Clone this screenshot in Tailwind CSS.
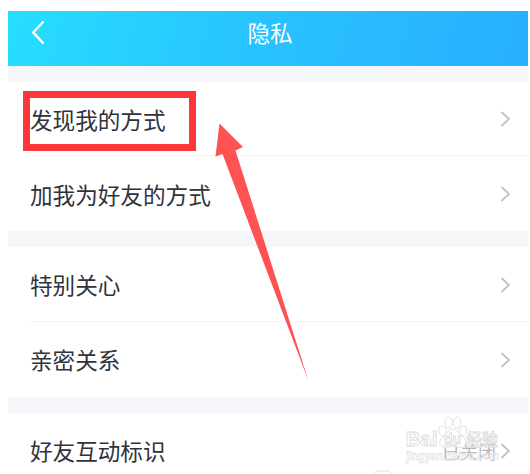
<!DOCTYPE html>
<html lang="zh-CN">
<head>
  <meta charset="UTF-8">
  <meta name="viewport" content="width=device-width, initial-scale=1.0">
  <title>隐私</title>
  <script src="https://cdn.jsdelivr.net/npm/@tailwindcss/browser@4"></script>
</head>
<body class="bg-white h-[474px] overflow-hidden font-['Noto_Sans_CJK_SC',sans-serif] text-[22.6px] leading-none text-[#30323c]">
  <div class="relative h-[474px] pt-[11px] pl-2 pr-0.5 overflow-hidden">

    <!-- Header -->
    <header class="relative h-[55px] flex items-center justify-center bg-linear-[105deg] from-[#27ddff] via-[#28c2ff] to-[#28afff] text-white">
      <svg class="absolute left-[22px] top-[9px] w-4 h-[25px]" viewBox="0 0 16 25" fill="none" stroke="currentColor" stroke-width="2.3">
        <path d="M13.6 1.5L3.2 12.4L13.6 23.6"/>
      </svg>
      <h1 class="pb-[11px] pl-1">隐私</h1>
    </header>

    <!-- Settings -->
    <main>
      <section class="border-t-[16px] border-[#f5f7fa]">
        <div class="h-[73px] pl-[22px] pr-[17px] flex items-center justify-between">
          <span class="pt-[3px]">发现我的方式</span>
          <svg class="w-[11px] h-4" viewBox="0 0 11 16" fill="none" stroke="#c2c2c2" stroke-width="1.8"><path d="M1.5 1L9 8L1.5 15"/></svg>
        </div>
        <div class="h-[76px] ml-[22px] pr-[17px] flex items-center justify-between border-t border-[#f3f4f5]">
          <span class="pt-[3px]">加我为好友的方式</span>
          <svg class="w-[11px] h-4" viewBox="0 0 11 16" fill="none" stroke="#c2c2c2" stroke-width="1.8"><path d="M1.5 1L9 8L1.5 15"/></svg>
        </div>
      </section>
      <section class="border-t-[16px] border-[#f5f7fa]">
        <div class="h-[74px] pl-[22px] pr-[17px] pt-px flex items-center justify-between">
          <span class="pt-[2px]">特别关心</span>
          <svg class="w-[11px] h-4" viewBox="0 0 11 16" fill="none" stroke="#c2c2c2" stroke-width="1.8"><path d="M1.5 1L9 8L1.5 15"/></svg>
        </div>
        <div class="h-[76px] ml-[22px] pr-[17px] flex items-center justify-between border-t border-[#f3f4f5]">
          <span class="pt-[2px]">亲密关系</span>
          <svg class="w-[11px] h-4" viewBox="0 0 11 16" fill="none" stroke="#c2c2c2" stroke-width="1.8"><path d="M1.5 1L9 8L1.5 15"/></svg>
        </div>
      </section>
      <section class="border-t-[16px] border-[#f5f7fa]">
        <div class="h-[75px] pl-[22px] pr-[17px] flex items-center">
          <span class="pt-[2px]">好友互动标识</span>
          <span class="ml-auto mr-1 text-[18px] text-[#b4b5bc]">已关闭</span>
          <svg class="w-[11px] h-4" viewBox="0 0 11 16" fill="none" stroke="#c2c2c2" stroke-width="1.8"><path d="M1.5 1L9 8L1.5 15"/></svg>
        </div>
      </section>
    </main>

    <!-- Highlight box and arrow -->
    <div class="absolute left-[23px] top-[91px] w-[173px] h-[60px] border-[7px] border-[#fc3737]"></div>
    <svg class="absolute left-0 top-0 w-[530px] h-[474px]" viewBox="0 0 530 474">
      <path d="M219.5 123.5L243 147L235.5 150.5L308.5 381L222.5 154L215.5 156.5Z" fill="#ff5252"/>
    </svg>

    <!-- Watermark -->
    <svg class="absolute left-[370px] top-[410px] w-[160px] h-[64px] font-['Liberation_Sans','Noto_Sans_CJK_SC',sans-serif]" viewBox="370 410 160 64" fill="#ffffff" fill-opacity="0.6" stroke="#dadada" stroke-width="0.8">
      <text x="405.5" y="446" font-size="21" font-weight="700" textLength="32" lengthAdjust="spacingAndGlyphs">Bai</text>
      <text x="466" y="446" font-size="16.5" font-weight="500" textLength="32" lengthAdjust="spacingAndGlyphs">经验</text>
      <text x="406" y="459.5" font-size="12" font-weight="700" textLength="93" lengthAdjust="spacingAndGlyphs" stroke-width="0.5">jingyan.baidu.com</text>
      <ellipse cx="442.5" cy="431" rx="3.8" ry="5" transform="rotate(-20 442.5 431)"/>
      <ellipse cx="448.5" cy="422.5" rx="3.8" ry="5.3"/>
      <ellipse cx="457" cy="422.5" rx="3.8" ry="5.3" transform="rotate(8 457 422.5)"/>
      <ellipse cx="463" cy="431" rx="3.8" ry="5" transform="rotate(20 463 431)"/>
      <path d="M453 429C448 429 447 434 443 437C437 442 440 448 446 447.500C451 446.500 455 446.500 459 447.500C466 448.500 468 442 464 438C460 435 458 429 453 429Z"/>
      <text x="444" y="444" font-size="14" font-weight="700">du</text>
      <path d="M374 474Q375 471 378 471H387Q390 471 392 474" fill="none"/>
    </svg>
  </div>
</body>
</html>
